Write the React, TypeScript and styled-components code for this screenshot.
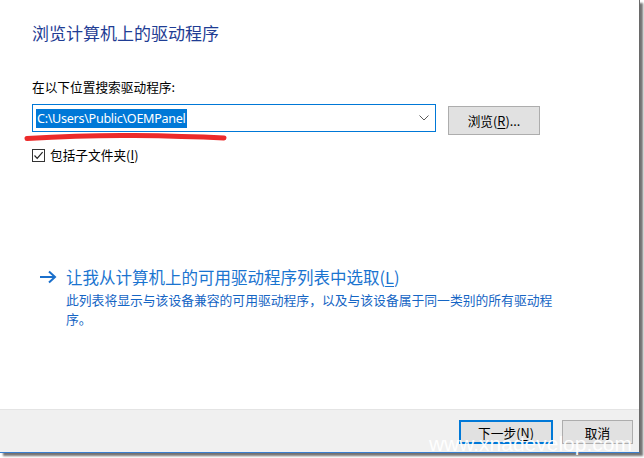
import React from "react";
import styled, { createGlobalStyle } from "styled-components";

const GlobalStyle = createGlobalStyle`
  html, body { margin: 0; padding: 0; background: #ffffff; }
  body {
    width: 644px; height: 458px; overflow: hidden;
    font-family: "Noto Sans CJK SC", "Noto Sans", sans-serif;
    color: #000;
  }
`;

const Window = styled.div`
  position: relative;
  width: 640px;
  height: 453px;
  box-sizing: border-box;
  background: #ffffff;
  border-right: 1px solid #6a6a6a;
  border-bottom: 1px solid #3a7fd0;
  box-shadow: 3px 3px 2px rgba(0, 0, 0, 0.55);
  display: flex;
  flex-direction: column;
`;

const Main = styled.div`
  position: relative;
  flex: 1;
  display: flex;
  flex-direction: column;
  align-items: flex-start;
  padding: 21px 0 0 32px;
`;

const Title = styled.div`
  font-size: 17px;
  line-height: 24px;
  color: #1f3d94;
`;

const Label = styled.div`
  margin-top: 33px;
  font-size: 12.7px;
  line-height: 18px;
`;

const PathRow = styled.div`
  position: relative;
  margin-top: 8px;
  display: flex;
  align-items: flex-start;
`;

const Combo = styled.div`
  width: 404px;
  height: 28px;
  box-sizing: border-box;
  border: 1px solid #0078d7;
  background: #fff;
  display: flex;
  align-items: center;
  justify-content: space-between;
  padding: 0 6px 0 3px;
`;

const Selected = styled.span`
  font-family: "Noto Sans", "Open Sans", sans-serif;
  font-size: 12.6px;
  line-height: 19px;
  height: 19px;
  padding: 0 1px;
  background: #0078d7;
  color: #fff;
  letter-spacing: -0.3px;
`;

const Chevron = styled.svg`
  width: 10px;
  height: 6px;
  display: block;
`;

const Button = styled.button<{ $primary?: boolean; $w: number; $h: number }>`
  width: ${(p) => p.$w}px;
  height: ${(p) => p.$h}px;
  box-sizing: border-box;
  background: #e1e1e1;
  border: ${(p) => (p.$primary ? "2px solid #0078d7" : "1px solid #adadad")};
  font-family: "Noto Sans CJK SC", sans-serif;
  font-size: 12.7px;
  color: #000;
  padding: 0;
  display: flex;
  align-items: center;
  justify-content: center;
`;

const BrowseButton = styled(Button)`
  margin-left: 12px;
  margin-top: 2px;
`;

const Key = styled.span`
  text-decoration: underline;
  text-underline-offset: 2px;
`;

const RedMark = styled.svg`
  position: absolute;
  left: -8px;
  top: 27px;
  width: 204px;
  height: 12px;
  pointer-events: none;
`;

const CheckRow = styled.div`
  margin-top: 11px;
  display: flex;
  align-items: center;
  gap: 5px;
  font-size: 12.7px;
  line-height: 18px;
`;

const CheckBox = styled.span`
  width: 13px;
  height: 13px;
  box-sizing: border-box;
  border: 1px solid #333;
  background: #fff;
  display: flex;
  align-items: center;
  justify-content: center;
`;

const LinkRow = styled.div`
  margin-top: 102px;
  display: flex;
  align-items: flex-start;
  color: #1a6fcb;
`;

const Arrow = styled.svg`
  margin-left: 7px;
  margin-top: 4px;
  width: 18px;
  height: 14px;
  flex: none;
`;

const LinkBody = styled.div`
  margin-left: 9px;
  width: 492px;
`;

const LinkTitle = styled.div`
  font-size: 16.5px;
  line-height: 22px;
  color: #1a74d0;
`;

const LinkDesc = styled.div`
  margin-top: 2px;
  font-size: 12.8px;
  line-height: 19px;
  color: #1565c4;
`;

const Footer = styled.div`
  height: 43px;
  box-sizing: border-box;
  background: #f0f0f0;
  border-top: 1px solid #e4e4e4;
  display: flex;
  justify-content: flex-end;
  align-items: flex-start;
  gap: 9px;
  padding: 10px 6px 0 0;
`;

const Watermark = styled.div`
  position: absolute;
  right: 7px;
  top: 432px;
  font-family: "Liberation Sans", sans-serif;
  font-size: 21px;
  line-height: 24px;
  color: rgba(255, 255, 255, 0.95);
  white-space: nowrap;
  pointer-events: none;
`;

export default function App() {
  return (
    <>
      <GlobalStyle />
      <Window>
        <Main>
          <Title>浏览计算机上的驱动程序</Title>
          <Label>在以下位置搜索驱动程序:</Label>
          <PathRow>
            <Combo>
              <Selected>C:\Users\Public\OEMPanel</Selected>
              <Chevron viewBox="0 0 10 6">
                <path d="M0.5 0.5 L5 5 L9.5 0.5" fill="none" stroke="#5a5a5a" strokeWidth="1" />
              </Chevron>
            </Combo>
            <BrowseButton $w={92} $h={29}>
              浏览(<Key>R</Key>)...
            </BrowseButton>
            <RedMark viewBox="0 0 204 12">
              <path
                d="M3 7.5 Q60 4 110 4.5 Q160 5 200 7"
                fill="none"
                stroke="#ec2b2b"
                strokeWidth="5"
                strokeLinecap="round"
              />
            </RedMark>
          </PathRow>
          <CheckRow>
            <CheckBox>
              <svg width="11" height="11" viewBox="0 0 11 11">
                <path d="M1.5 5.5 L4.2 8.3 L9.6 2.2" fill="none" stroke="#222" strokeWidth="1.2" />
              </svg>
            </CheckBox>
            <span>
              包括子文件夹(<Key>I</Key>)
            </span>
          </CheckRow>
          <LinkRow>
            <Arrow viewBox="0 0 18 14">
              <path d="M1 7 H16 M10 1.5 L16 7 L10 12.5" fill="none" stroke="#1a6fcb" strokeWidth="2" />
            </Arrow>
            <LinkBody>
              <LinkTitle>
                让我从计算机上的可用驱动程序列表中选取(<Key>L</Key>)
              </LinkTitle>
              <LinkDesc>
                此列表将显示与该设备兼容的可用驱动程序，以及与该设备属于同一类别的所有驱动程序。
              </LinkDesc>
            </LinkBody>
          </LinkRow>
        </Main>
        <Footer>
          <Button $primary $w={94} $h={24}>
            下一步(<Key>N</Key>)
          </Button>
          <Button $w={71} $h={24}>
            取消
          </Button>
        </Footer>
        <Watermark>www.xnadevelop.com</Watermark>
      </Window>
    </>
  );
}
